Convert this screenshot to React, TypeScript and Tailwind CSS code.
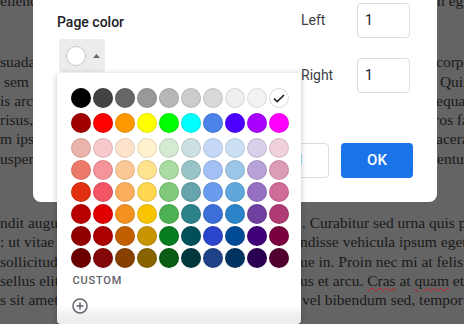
import React from "react";

const row1 = [
  "bg-[#000000]",
  "bg-[#434343]",
  "bg-[#666666]",
  "bg-[#999999]",
  "bg-[#b7b7b7]",
  "bg-[#cccccc]",
  "bg-[#d9d9d9]",
  "bg-[#efefef]",
  "bg-[#f3f3f3]",
];

const row2 = [
  "bg-[#a00000]",
  "bg-[#ff0000]",
  "bg-[#ff9900]",
  "bg-[#ffff00]",
  "bg-[#00ff00]",
  "bg-[#00ffff]",
  "bg-[#4a84e8]",
  "bg-[#4b00ff]",
  "bg-[#aa00ff]",
  "bg-[#ff00ff]",
];

const shades = [
  ["bg-[#ebb4ab]", "bg-[#f8c9cc]", "bg-[#fde3cb]", "bg-[#fff1cc]", "bg-[#d4ead1]", "bg-[#cce0e3]", "bg-[#c6d8f8]", "bg-[#cbe1f3]", "bg-[#dacfea]", "bg-[#efd0dc]"],
  ["bg-[#ec7a6a]", "bg-[#f59499]", "bg-[#fbc796]", "bg-[#ffe38f]", "bg-[#aadba0]", "bg-[#98c4c8]", "bg-[#a2c0f5]", "bg-[#9cc6e8]", "bg-[#b7a2d8]", "bg-[#dc9cb8]"],
  ["bg-[#e0300f]", "bg-[#f25563]", "bg-[#fcad5c]", "bg-[#ffd84f]", "bg-[#80c97a]", "bg-[#66a4ac]", "bg-[#6a9cee]", "bg-[#60a8dc]", "bg-[#9670c2]", "bg-[#d06c98]"],
  ["bg-[#b80000]", "bg-[#e00000]", "bg-[#f3921e]", "bg-[#f8c500]", "bg-[#4db052]", "bg-[#2c8088]", "bg-[#3c70d8]", "bg-[#2b84c8]", "bg-[#7040a0]", "bg-[#b03c74]"],
  ["bg-[#900000]", "bg-[#aa0000]", "bg-[#c25f00]", "bg-[#c89400]", "bg-[#067d20]", "bg-[#005058]", "bg-[#2b44cc]", "bg-[#004c94]", "bg-[#400078]", "bg-[#7a0040]"],
  ["bg-[#6b0000]", "bg-[#830808]", "bg-[#884000]", "bg-[#886400]", "bg-[#0b5c14]", "bg-[#00383e]", "bg-[#1f4288]", "bg-[#00335f]", "bg-[#2a0052]", "bg-[#520030]"],
];

type Line = { l: string; r: string; w: string; rich?: boolean };

const para1: Line[] = [{ l: "ellend", r: "n eg", w: "w-[437px]" }];
const para2: Line[] = [
  { l: "suada", r: "corp", w: "w-[436px]" },
  { l: " sem c", r: " Quis", w: "w-[436px]" },
  { l: "is arc", r: "equa", w: "w-[436px]" },
  { l: "risus, ", r: "ros fa", w: "w-[434px]" },
  { l: "m ipsu", r: "acera", w: "w-[436px]" },
  { l: "usper", r: "entu", w: "w-[437px]" },
];
const para3: Line[] = [
  { l: "ndit augue", r: ". Curabitur sed urna quis pretium", w: "w-[302px]" },
  { l: ": ut vitae s", r: "ndisse vehicula ipsum eget", w: "w-[300px]" },
  { l: "sollicitudi", r: "ue in. Proin nec mi at felis eu", w: "w-[300px]" },
  { l: "sellus elit", r: "", w: "w-[300px]", rich: true },
  { l: "s sit amet", r: "vel bibendum sed, tempor", w: "w-[302px]" },
];

function DocLine({ line }: { line: Line }) {
  return (
    <div className="flex h-[19.3px] whitespace-pre">
      <span className={`${line.w} shrink-0 overflow-hidden`}>{line.l}</span>
      {line.rich ? (
        <span>
          us et arcu.{" "}
          <span className="underline decoration-wavy decoration-[#c5221f] decoration-1 underline-offset-[1px]">Cras</span> at{" "}
          <span className="underline decoration-wavy decoration-[#c5221f] decoration-1 underline-offset-[1px]">quam</span> et
        </span>
      ) : (
        <span>{line.r}</span>
      )}
    </div>
  );
}

function Circle({ cls }: { cls: string }) {
  return <div className={`w-5 h-5 shrink-0 rounded-full ${cls} shadow-[inset_0_0_0_1px_rgba(0,0,0,0.1)]`} />;
}

export default function App() {
  return (
    <div className="relative w-[464px] h-[324px] overflow-hidden bg-[#646464]">
      {/* Document text behind the modal */}
      <div
        className="flex flex-col -mt-[9px] text-[15.5px] leading-[19.3px] text-[#1a1a1a]"
        style={{ fontFamily: '"Liberation Serif", "DejaVu Serif", serif' }}
      >
        <div className="flex flex-col">
          {para1.map((ln, i) => (
            <DocLine key={i} line={ln} />
          ))}
        </div>
        <div className="flex flex-col mt-[42px]">
          {para2.map((ln, i) => (
            <DocLine key={i} line={ln} />
          ))}
        </div>
        <div className="flex flex-col mt-[45px]">
          {para3.map((ln, i) => (
            <DocLine key={i} line={ln} />
          ))}
        </div>
      </div>

      {/* Dialog */}
      <div
        className="absolute left-[33px] top-0 w-[404px] h-[202px] bg-white rounded-b-[8px] flex flex-col px-6 pb-6"
        style={{ fontFamily: 'Roboto, "Liberation Sans", sans-serif' }}
      >
        <div className="flex">
          <div className="w-[244px] shrink-0 pt-[12px] flex flex-col items-start">
            <div className="text-[14px] leading-[20px] font-medium text-[#202124]">Page color</div>
            <div className="mt-[7px] ml-[2px] w-[46px] h-[33px] rounded-[4px] bg-[#ececec] flex items-center pl-[7px]">
              <div className="w-5 h-5 rounded-full bg-white border border-[#c6c6c6]" />
              <svg width="7" height="4" viewBox="0 0 7 4" className="ml-[7px]">
                <path d="M0 4 L3.5 0 L7 4 Z" fill="#666666" />
              </svg>
            </div>
          </div>
          <div className="pt-[3px] flex flex-col gap-[20px]">
            <div className="flex items-center">
              <div className="w-[56px] text-[14px] text-[#3c4043]">Left</div>
              <div className="w-[53px] h-[35px] border border-[#dadce0] rounded-[4px] pl-[7px] flex items-center text-[14px] text-[#202124]">
                1
              </div>
            </div>
            <div className="flex items-center">
              <div className="w-[56px] text-[14px] text-[#3c4043]">Right</div>
              <div className="w-[53px] h-[35px] border border-[#dadce0] rounded-[4px] pl-[7px] flex items-center text-[14px] text-[#202124]">
                1
              </div>
            </div>
          </div>
        </div>
        <div className="mt-auto flex justify-end gap-3">
          <button className="h-[35px] px-[26px] border border-[#dadce0] rounded-[4px] text-[14px] font-medium text-[#1a73e8] bg-white">
            Cancel
          </button>
          <button className="h-[35px] w-[72px] rounded-[4px] bg-[#1a73e8] text-white text-[15px] font-medium">OK</button>
        </div>
      </div>

      {/* Color palette popup */}
      <div
        className="absolute left-[57px] top-[73px] w-[244px] h-[251px] rounded-[4px] shadow-[0_1px_5px_1px_rgba(0,0,0,0.18)] bg-[linear-gradient(to_bottom,#ffffff_232px,#eeeeee_243px)] pt-[15px] pl-[14px] flex flex-col"
        style={{ fontFamily: 'Roboto, "Liberation Sans", sans-serif' }}
      >
        <div className="flex gap-[2px]">
          {row1.map((c, i) => (
            <Circle key={i} cls={c} />
          ))}
          <div className="w-5 h-5 shrink-0 rounded-full bg-white shadow-[inset_0_0_0_1px_rgba(0,0,0,0.14)] flex items-center justify-center">
            <svg width="12" height="9" viewBox="0 0 12 9">
              <path d="M1 4.6 L4.2 7.6 L11 1" fill="none" stroke="#202124" strokeWidth="1.6" />
            </svg>
          </div>
        </div>
        <div className="flex gap-[2px] mt-[5px]">
          {row2.map((c, i) => (
            <Circle key={i} cls={c} />
          ))}
        </div>
        <div className="flex flex-col gap-[2px] mt-[5px]">
          {shades.map((row, r) => (
            <div key={r} className="flex gap-[2px]">
              {row.map((c, i) => (
                <Circle key={i} cls={c} />
              ))}
            </div>
          ))}
        </div>
        <div className="mt-[5px] ml-[1.5px] text-[11px] leading-4 font-medium tracking-[0.8px] text-[#5f6368]">CUSTOM</div>
        <div className="mt-[9px] ml-[1px]">
          <svg width="16" height="16" viewBox="0 0 16 16">
            <circle cx="8" cy="8" r="7" fill="none" stroke="#5f6368" strokeWidth="1.5" />
            <path d="M8 4.5 V11.5 M4.5 8 H11.5" stroke="#5f6368" strokeWidth="1.5" />
          </svg>
        </div>
      </div>
    </div>
  );
}
